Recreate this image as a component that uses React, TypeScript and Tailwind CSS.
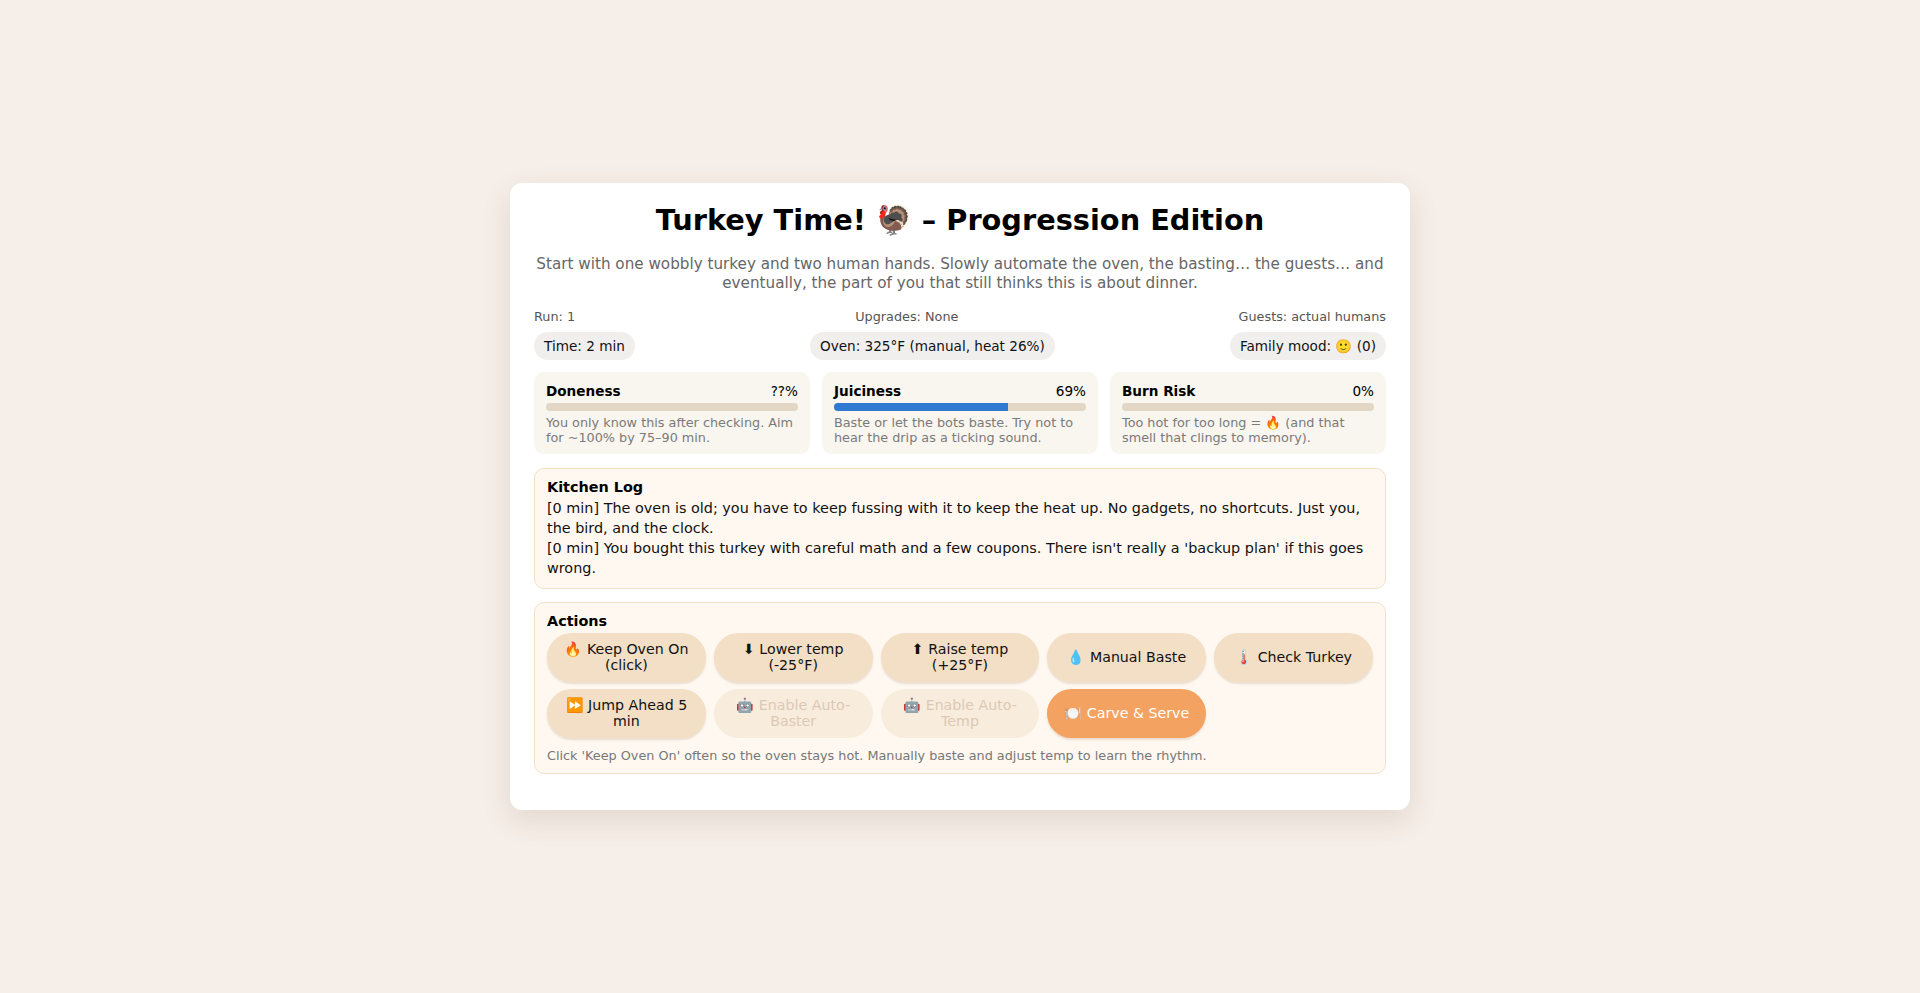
const FONT = "font-['DejaVu_Sans',_'Noto_Sans',_sans-serif]"

const METERS = [
  {
    id: 'doneness',
    label: 'Doneness',
    value: '??%',
    fill: 0,
    note: 'You only know this after checking. Aim for ~100% by 75–90 min.',
  },
  {
    id: 'juiciness',
    label: 'Juiciness',
    value: '69%',
    fill: 69,
    note: 'Baste or let the bots baste. Try not to hear the drip as a ticking sound.',
  },
  {
    id: 'burn',
    label: 'Burn Risk',
    value: '0%',
    fill: 0,
    note: 'Too hot for too long = 🔥 (and that smell that clings to memory).',
  },
]

const ACTIONS = [
  { id: 'oven', label: '🔥 Keep Oven On (click)' },
  { id: 'lower', label: '⬇ Lower temp (-25°F)' },
  { id: 'raise', label: '⬆ Raise temp (+25°F)' },
  { id: 'baste', label: '💧 Manual Baste' },
  { id: 'check', label: '🌡️ Check Turkey' },
  { id: 'jump', label: '⏩ Jump Ahead 5 min' },
  { id: 'autobaste', label: '🤖 Enable Auto-Baster', disabled: true },
  { id: 'autotemp', label: '🤖 Enable Auto-Temp', disabled: true },
  { id: 'serve', label: '🍽️ Carve & Serve', primary: true },
]

const LOG = [
  '[0 min] The oven is old; you have to keep fussing with it to keep the heat up. No gadgets, no shortcuts. Just you, the bird, and the clock.',
  "[0 min] You bought this turkey with careful math and a few coupons. There isn't really a 'backup plan' if this goes wrong.",
]

function Pill({ children }: { children: React.ReactNode }) {
  return (
    <span className="h-[28px] rounded-full bg-[#f1efed] px-[10px] text-[13.6px] leading-[28px] text-[#111]">
      {children}
    </span>
  )
}

export default function App() {
  return (
    <div className={`flex min-h-screen items-center justify-center bg-[#f6eee8] ${FONT}`}>
      <div className="w-[900px] rounded-xl bg-white px-6 pt-5 pb-5 shadow-[0_10px_30px_rgba(90,60,30,0.12)]">
        {/* Header */}
        <h1 className="h-[34px] text-center text-[28.8px] leading-[34px] font-bold text-black">
          Turkey Time! 🦃 – Progression Edition
        </h1>
        <p className="mt-[18px] text-center text-[15.2px] leading-[18.4px] text-[#666]">
          Start with one wobbly turkey and two human hands. Slowly automate the oven, the basting… the guests… and
          eventually, the part of you that still thinks this is about dinner.
        </p>

        {/* Status */}
        <div className="mt-[17px] flex justify-between text-[12.8px] leading-[15px] text-[#555]">
          <span>Run: 1</span>
          <span>Upgrades: None</span>
          <span>Guests: actual humans</span>
        </div>
        <div className="mt-2 flex justify-between">
          <Pill>Time: 2 min</Pill>
          <Pill>Oven: 325°F (manual, heat 26%)</Pill>
          <Pill>Family mood: 🙂 (0)</Pill>
        </div>

        {/* Meters */}
        <div className="mt-3 grid grid-cols-3 gap-3">
          {METERS.map((m) => (
            <div key={m.id} className="rounded-[10px] bg-[#f9f5ef] px-3 pt-[11px] pb-[9px]">
              <div className="flex h-[16px] justify-between text-[13.6px] leading-[16px] text-black">
                <span className="font-bold">{m.label}</span>
                <span>{m.value}</span>
              </div>
              <div className="mt-1 h-2 overflow-hidden rounded-full bg-[#e3d6c4]">
                <div className="h-full bg-[#3079d2]" style={{ width: `${m.fill}%` }} />
              </div>
              <p className="mt-1 text-[12.8px] leading-[15px] text-[#7a7a7a]">{m.note}</p>
            </div>
          ))}
        </div>

        {/* Log */}
        <div className="mt-[14px] rounded-[10px] border border-[#f2e1c8] bg-[#fff8f0] px-3 py-[10px]">
          <div className="text-[14.4px] leading-[17px] font-bold text-black">Kitchen Log</div>
          <div className="mt-[2px] text-[14.4px] leading-[20px] text-[#111]">
            {LOG.map((line, i) => (
              <div key={i}>{line}</div>
            ))}
          </div>
        </div>

        {/* Actions */}
        <div className="mt-[13px] mb-4 rounded-[10px] border border-[#f2e1c8] bg-[#fff8f0] px-3 pt-[10px] pb-[10px]">
          <div className="text-[14.4px] leading-[17px] font-bold text-black">Actions</div>
          <div className="mt-[3px] grid grid-cols-5 gap-x-2 gap-y-[7px]">
            {ACTIONS.map((a) => (
              <button
                key={a.id}
                disabled={a.disabled}
                className={
                  a.primary
                    ? 'min-h-[49px] rounded-full bg-[#f4a261] px-[10px] py-2 text-center text-[14.2px] leading-[16px] text-white shadow-[0_2px_2px_rgba(120,80,40,0.15)]'
                    : a.disabled
                      ? 'min-h-[49px] rounded-full bg-[#f8ecdd] px-[10px] py-2 text-center text-[14.2px] leading-[16px] text-[#dcc9b4]'
                      : 'min-h-[49px] rounded-full bg-[#f2dfc6] px-[10px] py-2 text-center text-[14.2px] leading-[16px] text-[#111] shadow-[0_2px_2px_rgba(120,80,40,0.15)]'
                }
              >
                {a.label}
              </button>
            ))}
          </div>
          <p className="mt-[10px] text-[12.8px] leading-[15px] text-[#777]">
            Click 'Keep Oven On' often so the oven stays hot. Manually baste and adjust temp to learn the rhythm.
          </p>
        </div>
      </div>
    </div>
  )
}
